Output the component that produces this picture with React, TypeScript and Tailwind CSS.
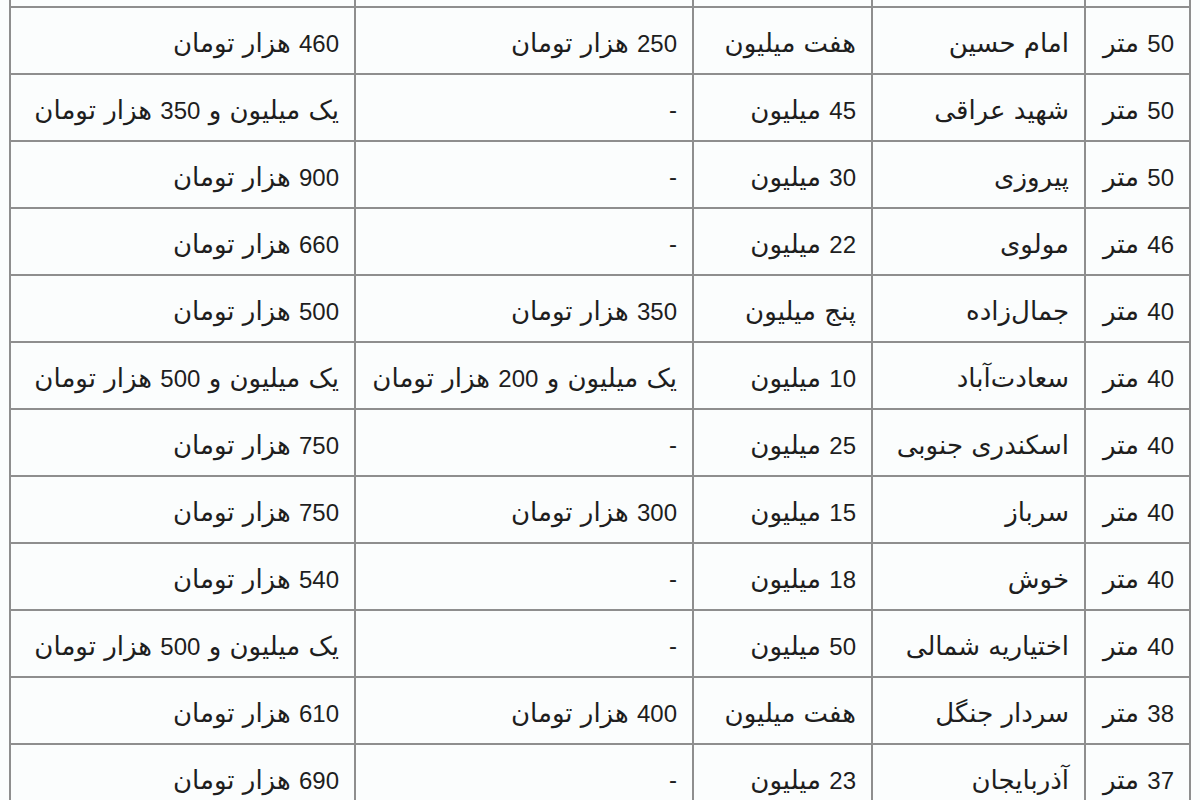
const rows: string[][] = [
  ["", "", "", "", ""],
  ["50 متر", "امام حسین", "هفت میلیون", "250 هزار تومان", "460 هزار تومان"],
  ["50 متر", "شهید عراقی", "45 میلیون", "-", "یک میلیون و 350 هزار تومان"],
  ["50 متر", "پیروزی", "30 میلیون", "-", "900 هزار تومان"],
  ["46 متر", "مولوی", "22 میلیون", "-", "660 هزار تومان"],
  ["40 متر", "جمال‌زاده", "پنج میلیون", "350 هزار تومان", "500 هزار تومان"],
  ["40 متر", "سعادت‌آباد", "10 میلیون", "یک میلیون و 200 هزار تومان", "یک میلیون و 500 هزار تومان"],
  ["40 متر", "اسکندری جنوبی", "25 میلیون", "-", "750 هزار تومان"],
  ["40 متر", "سرباز", "15 میلیون", "300 هزار تومان", "750 هزار تومان"],
  ["40 متر", "خوش", "18 میلیون", "-", "540 هزار تومان"],
  ["40 متر", "اختیاریه شمالی", "50 میلیون", "-", "یک میلیون و 500 هزار تومان"],
  ["38 متر", "سردار جنگل", "هفت میلیون", "400 هزار تومان", "610 هزار تومان"],
  ["37 متر", "آذربایجان", "23 میلیون", "-", "690 هزار تومان"],
];

// digits and dashes get the latin font, persian words a slightly larger one
function Cell({ text }: { text: string }) {
  const parts = text.split(/([0-9-]+)/).filter(p => p !== "");
  return (
    <>
      {parts.map((p, i) =>
        /^[0-9-]+$/.test(p) ? (
          <span key={i} className="font-['Liberation_Sans',sans-serif] text-[24px]">
            {p}
          </span>
        ) : (
          <span key={i} className="font-['DejaVu_Sans',sans-serif] text-[26px]">
            {p}
          </span>
        )
      )}
    </>
  );
}

export default function App() {
  return (
    <div className="w-[1200px] h-[800px] overflow-hidden bg-[#fbfdfd] pl-[9px]">
      <table
        dir="rtl"
        className="mt-[-61px] w-[1180px] table-fixed border-collapse text-[#1e1e1e] leading-none"
      >
        <colgroup>
          <col className="w-[105px]" />
          <col className="w-[213px]" />
          <col className="w-[179px]" />
          <col className="w-[338px]" />
          <col className="w-[345px]" />
        </colgroup>
        <tbody>
          {rows.map((row, i) => (
            <tr key={i} className="h-[67px]">
              {row.map((cell, j) => (
                <td
                  key={j}
                  className="border-2 border-[#8e8e8e] pr-[15px] pl-2 pt-[4px] text-right align-middle whitespace-nowrap"
                >
                  <Cell text={cell} />
                </td>
              ))}
            </tr>
          ))}
        </tbody>
      </table>
    </div>
  );
}
